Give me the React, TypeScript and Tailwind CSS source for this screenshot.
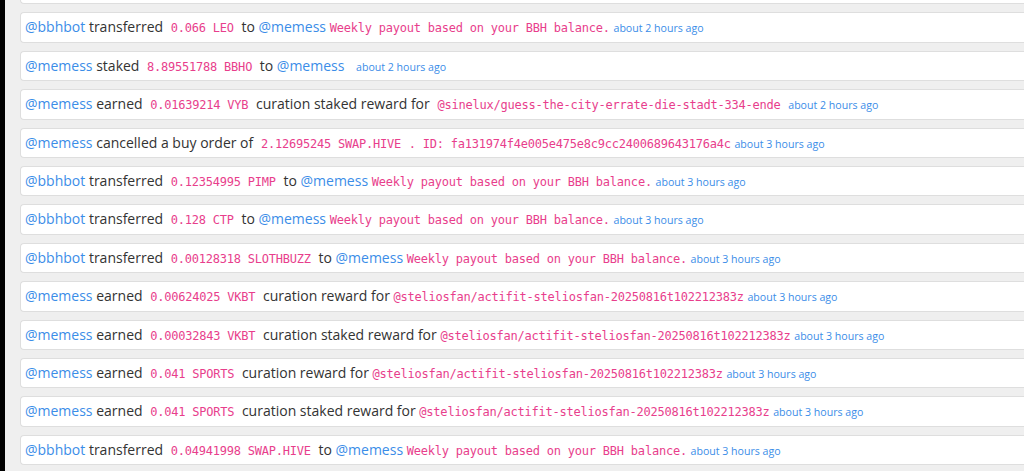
import React from 'react'

type Part =
  | { t: 'user'; v: string }
  | { t: 'txt'; v: string }
  | { t: 'amt'; v: string }
  | { t: 'code'; v: string }

const memo = 'Weekly payout based on your BBH balance.'
const post = '@steliosfan/actifit-steliosfan-20250816t102212383z'

const rows: { parts: Part[]; time: string }[] = [
  {
    parts: [{ t: 'user', v: '@bbhbot' }, { t: 'txt', v: 'transferred' }, { t: 'amt', v: '0.066 LEO' }, { t: 'txt', v: 'to' }, { t: 'user', v: '@memess' }, { t: 'code', v: memo }],
    time: 'about 2 hours ago',
  },
  {
    parts: [{ t: 'user', v: '@memess' }, { t: 'txt', v: 'staked' }, { t: 'amt', v: '8.89551788 BBHO' }, { t: 'txt', v: 'to' }, { t: 'user', v: '@memess' }, { t: 'amt', v: '' }],
    time: 'about 2 hours ago',
  },
  {
    parts: [{ t: 'user', v: '@memess' }, { t: 'txt', v: 'earned' }, { t: 'amt', v: '0.01639214 VYB' }, { t: 'txt', v: 'curation staked reward for' }, { t: 'amt', v: '@sinelux/guess-the-city-errate-die-stadt-334-ende' }],
    time: 'about 2 hours ago',
  },
  {
    parts: [{ t: 'user', v: '@memess' }, { t: 'txt', v: 'cancelled a buy order of' }, { t: 'amt', v: '2.12695245 SWAP.HIVE' }, { t: 'code', v: '. ID: fa131974f4e005e475e8c9cc2400689643176a4c' }],
    time: 'about 3 hours ago',
  },
  {
    parts: [{ t: 'user', v: '@bbhbot' }, { t: 'txt', v: 'transferred' }, { t: 'amt', v: '0.12354995 PIMP' }, { t: 'txt', v: 'to' }, { t: 'user', v: '@memess' }, { t: 'code', v: memo }],
    time: 'about 3 hours ago',
  },
  {
    parts: [{ t: 'user', v: '@bbhbot' }, { t: 'txt', v: 'transferred' }, { t: 'amt', v: '0.128 CTP' }, { t: 'txt', v: 'to' }, { t: 'user', v: '@memess' }, { t: 'code', v: memo }],
    time: 'about 3 hours ago',
  },
  {
    parts: [{ t: 'user', v: '@bbhbot' }, { t: 'txt', v: 'transferred' }, { t: 'amt', v: '0.00128318 SLOTHBUZZ' }, { t: 'txt', v: 'to' }, { t: 'user', v: '@memess' }, { t: 'code', v: memo }],
    time: 'about 3 hours ago',
  },
  {
    parts: [{ t: 'user', v: '@memess' }, { t: 'txt', v: 'earned' }, { t: 'amt', v: '0.00624025 VKBT' }, { t: 'txt', v: 'curation reward for' }, { t: 'code', v: post }],
    time: 'about 3 hours ago',
  },
  {
    parts: [{ t: 'user', v: '@memess' }, { t: 'txt', v: 'earned' }, { t: 'amt', v: '0.00032843 VKBT' }, { t: 'txt', v: 'curation staked reward for' }, { t: 'code', v: post }],
    time: 'about 3 hours ago',
  },
  {
    parts: [{ t: 'user', v: '@memess' }, { t: 'txt', v: 'earned' }, { t: 'amt', v: '0.041 SPORTS' }, { t: 'txt', v: 'curation reward for' }, { t: 'code', v: post }],
    time: 'about 3 hours ago',
  },
  {
    parts: [{ t: 'user', v: '@memess' }, { t: 'txt', v: 'earned' }, { t: 'amt', v: '0.041 SPORTS' }, { t: 'txt', v: 'curation staked reward for' }, { t: 'code', v: post }],
    time: 'about 3 hours ago',
  },
  {
    parts: [{ t: 'user', v: '@bbhbot' }, { t: 'txt', v: 'transferred' }, { t: 'amt', v: '0.04941998 SWAP.HIVE' }, { t: 'txt', v: 'to' }, { t: 'user', v: '@memess' }, { t: 'code', v: memo }],
    time: 'about 3 hours ago',
  },
]

const mono = "font-['DejaVu_Sans_Mono',monospace] text-[12px] tracking-[-0.22px] text-[#e83e8c]"

function Piece({ p }: { p: Part }) {
  if (p.t === 'user') return <a className="text-[#3b8de8]">{p.v}</a>
  if (p.t === 'txt') return <span className="text-[#333]">{p.v}</span>
  if (p.t === 'amt') return <code className={`${mono} mx-[4px]`}>{p.v}</code>
  return <code className={mono}>{p.v}</code>
}

function Row({ parts, time }: { parts: Part[]; time: string }) {
  return (
    <div className="h-[30.4px] mb-[8px] bg-white border border-[#dedede] border-r-0 rounded-l-[4px] pl-[4px] leading-[28px] whitespace-nowrap overflow-hidden">
      {parts.map((p, i) => (
        <React.Fragment key={i}>
          {i > 0 && ' '}
          <Piece p={p} />
        </React.Fragment>
      ))}{' '}
      <a className="text-[10.6px] text-[#3b8de8]">{time}</a>
    </div>
  )
}

export default function App() {
  return (
    <div className="h-[471px] w-[1024px] overflow-hidden flex bg-[#efefef] font-['Open_Sans',sans-serif] text-[14px]">
      <div className="w-[5px] bg-black shrink-0" />
      <div className="flex-1 pl-[15px] -mt-[26px]">
        <div className="h-[30.4px] mb-[8px] bg-white border border-[#dedede] border-r-0 rounded-l-[4px]" />
        {rows.map((r, i) => (
          <Row key={i} parts={r.parts} time={r.time} />
        ))}
      </div>
    </div>
  )
}
